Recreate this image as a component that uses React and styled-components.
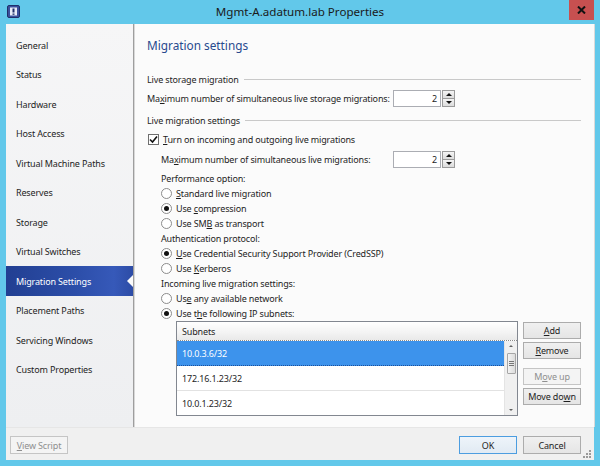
import React from "react";
import styled, { createGlobalStyle, css } from "styled-components";

const Global = createGlobalStyle`
  html, body { margin: 0; padding: 0; }
  body {
    width: 600px; height: 466px; overflow: hidden;
    font-family: "Noto Sans", "Open Sans", sans-serif;
    font-size: 9px; letter-spacing: -0.15px; color: #1e1e1e;
  }
  * { box-sizing: border-box; }
`;

const Window = styled.div`
  width: 600px; height: 466px;
  display: flex; flex-direction: column;
  background: #62c8ea;
  padding: 0 6px 6px 6px;
`;

const TitleBar = styled.div`
  height: 24px; flex: none;
  display: grid; grid-template-columns: 1fr auto 1fr;
  align-items: start;
`;

const AppIcon = styled.div`
  padding: 5px 0 0 1px;
  display: flex;
`;

const Title = styled.div`
  font-size: 11.6px; line-height: 24px; color: #1a1a1a; letter-spacing: 0;
`;

const Close = styled.div`
  justify-self: end;
  width: 25px; height: 20px;
  background: #c75050;
  display: flex; align-items: center; justify-content: center;
`;

const Body = styled.div`
  flex: 1; display: flex; flex-direction: column;
  background: #f0f0f0;
`;

const Main = styled.div`
  height: 403px; display: flex;
`;

const Sidebar = styled.div`
  width: 127px; flex: none;
  background: linear-gradient(180deg, #f6f6f7 0%, #eeeff1 100%);
  padding-top: 6px;
`;

const NavItem = styled.div`
  height: 29.5px; display: flex; align-items: center;
  padding-left: 10px; padding-top: 1px; position: relative;
  color: #1e1e1e;
  ${(p) => p.$active && css`
    color: #fff;
    background: linear-gradient(90deg, #223f92 0%, #2c4ea9 55%, #3659b9 85%, #2d4ca6 100%);
    &::after {
      content: ""; position: absolute; right: 0; top: 50%;
      margin-top: -6px;
      border-top: 6px solid transparent; border-bottom: 6px solid transparent;
      border-right: 6px solid #fbfbfb;
    }
  `}
`;

const Divider = styled.div`
  width: 2px; flex: none;
  background: #d8d8d8; border-left: 1px solid #9e9e9e;
`;

const Content = styled.div`
  flex: 1; background: #fbfbfb;
  padding: 9px 13px 0 12px;
  display: flex; flex-direction: column;
  border-right: 1px solid #dadada;
`;

const Heading = styled.div`
  height: 24px; margin-bottom: 12px;
  display: flex; align-items: center;
  font-size: 11.8px; color: #284a8e; letter-spacing: 0;
`;

const SectionHead = styled.div`
  height: 20px; display: flex; align-items: center;
  margin-top: ${(p) => p.$mt || 0}px;
  &::after { content: ""; flex: 1; height: 1px; background: #c9c9c9; margin-left: 5px; }
`;

const Row = styled.div`
  height: ${(p) => p.$h || 15.1}px;
  display: flex; align-items: center;
`;

const FieldLabel = styled.div`
  width: ${(p) => p.$w}px; flex: none; white-space: nowrap;
`;

const Indent = styled.div`
  padding-left: 14px; display: flex; flex-direction: column;
`;

const K = styled.span`text-decoration: underline;`;

const SpinWrap = styled.div`
  display: flex; gap: 1px; height: 17px;
`;

const SpinInput = styled.div`
  width: 48px; height: 17px; background: #fff;
  border: 1px solid #abadb3;
  display: flex; align-items: center; justify-content: flex-end;
  padding-right: 3px;
`;

const SpinBtns = styled.div`
  width: 13px; height: 17px; display: flex; flex-direction: column;
`;

const SpinBtn = styled.div`
  flex: 1; border: 1px solid #9a9a9a;
  ${(p) => p.$down ? "border-top: none;" : ""}
  background: linear-gradient(180deg, #f4f4f4, #dcdcdc);
  display: flex; align-items: center; justify-content: center;
`;

const Tri = styled.span`
  width: 0; height: 0;
  border-left: 3px solid transparent; border-right: 3px solid transparent;
  ${(p) => p.$down ? "border-top: 3px solid #111;" : "border-bottom: 3px solid #111;"}
`;

const CheckBox = styled.div`
  width: 11px; height: 11px; border: 1px solid #6f6f6f; background: #fff;
  display: flex; align-items: center; justify-content: center;
  margin: 0 4px 0 1px; flex: none;
`;

const Radio = styled.div`
  width: 11px; height: 11px; border-radius: 50%;
  border: 1px solid #8c8c8c; background: #fff;
  display: flex; align-items: center; justify-content: center;
  margin-right: 4px; flex: none;
  &::after {
    content: ""; width: 5px; height: 5px; border-radius: 50%;
    background: ${(p) => (p.$on ? "#111" : "transparent")};
  }
`;

const ListArea = styled.div`
  display: flex; gap: 5px; padding-left: 15px;
`;

const Table = styled.div`
  width: 342px; height: 95px; border: 1px solid #828790;
  background: #fff; display: flex; flex-direction: column;
`;

const THead = styled.div`
  height: 19px; flex: none; display: flex; align-items: center;
  padding-left: 5px;
  background: linear-gradient(180deg, #ffffff 0%, #f3f3f3 60%, #e9e9e9 100%);
  border-bottom: 1px dotted #8a8a8a;
`;

const TBody = styled.div`
  flex: 1; display: flex;
`;

const Rows = styled.div`
  flex: 1; display: flex; flex-direction: column;
`;

const TRow = styled.div`
  flex: 1; display: flex; align-items: center; padding-left: 5px;
  border-bottom: 1px solid #e2e2e2;
  &:last-child { border-bottom: none; }
  ${(p) => p.$sel && css`
    background: #3d93ec; color: #fff;
    border-bottom: 1px dotted #1b4f9a;
  `}
`;

const Scroll = styled.div`
  width: 13px; flex: none; background: #f0f0f0;
  border-left: 1px solid #e4e4e4;
  display: flex; flex-direction: column; align-items: center;
  padding: 4px 0 4px;
`;

const Arrow = styled.span`
  width: 0; height: 0;
  border-left: 2.5px solid transparent; border-right: 2.5px solid transparent;
  ${(p) => p.$down ? "border-top: 2.5px solid #606060;" : "border-bottom: 2.5px solid #606060;"}
`;

const Thumb = styled.div`
  width: 9px; height: 21px; margin-top: 6px;
  border: 1px solid #a6a6a6; border-radius: 1px;
  background: linear-gradient(90deg, #f3f3f3, #dcdcdc);
  display: flex; flex-direction: column; align-items: center; justify-content: center; gap: 1px;
  & > i { width: 5px; height: 1px; background: #777; display: block; }
`;

const Fill = styled.div`flex: 1;`;

const BtnCol = styled.div`
  display: flex; flex-direction: column; padding-top: 1px;
`;

const Button = styled.div`
  width: 58px; height: ${(p) => p.$h || 17}px; flex: none;
  display: flex; align-items: center; justify-content: center;
  border: 1px solid #acacac;
  background: linear-gradient(180deg, #f0f0f0, #e5e5e5);
  color: #1e1e1e;
  margin-top: ${(p) => p.$mt || 0}px;
  ${(p) => p.$default && css`border-color: #4c9de0; background: linear-gradient(180deg, #eef4fa, #e1eaf3);`}
  ${(p) => p.$disabled && css`
    background: #f4f4f4; border-color: #c5c5c5; color: #8f8f8f;
  `}
`;

const Footer = styled.div`
  flex: 1; display: flex; align-items: flex-start;
  padding: 8px 13px 0 4px; gap: 6px; position: relative;
  border-top: 1px solid #e6e6e6;
`;

const Grip = styled.div`
  position: absolute; right: 3px; bottom: 2px;
  display: grid; grid-template-columns: repeat(3, 2px); gap: 1px;
  & > i { width: 2px; height: 2px; display: block; }
  & > i.on { background: #9a9a9a; }
`;

const navItems = [
  "General", "Status", "Hardware", "Host Access", "Virtual Machine Paths",
  "Reserves", "Storage", "Virtual Switches", "Migration Settings",
  "Placement Paths", "Servicing Windows", "Custom Properties",
];

function Spin({ value }) {
  return (
    <SpinWrap>
      <SpinInput>{value}</SpinInput>
      <SpinBtns>
        <SpinBtn><Tri /></SpinBtn>
        <SpinBtn $down><Tri $down /></SpinBtn>
      </SpinBtns>
    </SpinWrap>
  );
}

function RadioRow({ on, children }) {
  return (
    <Row>
      <Radio $on={on} />
      <span>{children}</span>
    </Row>
  );
}

export default function App() {
  return (
    <>
      <Global />
      <Window>
        <TitleBar>
          <AppIcon>
            <svg width="13" height="13" viewBox="0 0 13 13">
              <rect x="0.5" y="0.5" width="12" height="12" rx="1.5" fill="#3a4f9c" stroke="#1f2f6a" />
              <rect x="3" y="2.5" width="7" height="8" fill="#e8ecf8" />
              <rect x="5.5" y="3.5" width="2" height="4" fill="#1f2f6a" />
              <rect x="5.5" y="8.5" width="2" height="1.3" fill="#1f2f6a" />
            </svg>
          </AppIcon>
          <Title>Mgmt-A.adatum.lab Properties</Title>
          <Close>
            <svg width="9" height="8" viewBox="0 0 9 8">
              <path d="M1 0.5 L8 7.5 M8 0.5 L1 7.5" stroke="#111" strokeWidth="2" />
            </svg>
          </Close>
        </TitleBar>
        <Body>
          <Main>
            <Sidebar>
              {navItems.map((n) => (
                <NavItem key={n} $active={n === "Migration Settings"}>{n}</NavItem>
              ))}
            </Sidebar>
            <Divider />
            <Content>
              <Heading>Migration settings</Heading>
              <SectionHead>Live storage migration</SectionHead>
              <Row $h={18}>
                <FieldLabel $w={246}>Ma<K>x</K>imum number of simultaneous live storage migrations:</FieldLabel>
                <Spin value="2" />
              </Row>
              <SectionHead $mt={3}>Live migration settings</SectionHead>
              <Row $h={18}>
                <CheckBox>
                  <svg width="9" height="9" viewBox="0 0 9 9">
                    <path d="M1 4.5 L3.5 7 L8 1.5" fill="none" stroke="#111" strokeWidth="1.6" />
                  </svg>
                </CheckBox>
                <span><K>T</K>urn on incoming and outgoing live migrations</span>
              </Row>
              <Indent>
                <Row $h={22.5}>
                  <FieldLabel $w={232}>Ma<K>x</K>imum number of simultaneous live migrations:</FieldLabel>
                  <Spin value="2" />
                </Row>
                <Row>Performance option:</Row>
                <RadioRow><K>S</K>tandard live migration</RadioRow>
                <RadioRow on>Use <K>c</K>ompression</RadioRow>
                <RadioRow>Use SM<K>B</K> as transport</RadioRow>
                <Row>Authentication protocol:</Row>
                <RadioRow on><K>U</K>se Credential Security Support Provider (CredSSP)</RadioRow>
                <RadioRow>Use <K>K</K>erberos</RadioRow>
                <Row>Incoming live migration settings:</Row>
                <RadioRow>Us<K>e</K> any available network</RadioRow>
                <RadioRow on>Use t<K>h</K>e following IP subnets:</RadioRow>
                <ListArea>
                  <Table>
                    <THead>Subnets</THead>
                    <TBody>
                      <Rows>
                        <TRow $sel>10.0.3.6/32</TRow>
                        <TRow>172.16.1.23/32</TRow>
                        <TRow>10.0.1.23/32</TRow>
                      </Rows>
                      <Scroll>
                        <Arrow />
                        <Thumb><i /><i /><i /></Thumb>
                        <Fill />
                        <Arrow $down />
                      </Scroll>
                    </TBody>
                  </Table>
                  <BtnCol>
                    <Button><K>A</K>dd</Button>
                    <Button $mt={3}><K>R</K>emove</Button>
                    <Button $mt={9} $disabled>M<K>o</K>ve up</Button>
                    <Button $mt={3}>Move do<K>w</K>n</Button>
                  </BtnCol>
                </ListArea>
              </Indent>
            </Content>
          </Main>
          <Footer>
            <Button $disabled $h={18}>
              <span><K>V</K>iew Script</span>
            </Button>
            <Fill />
            <Button $default $h={18}>OK</Button>
            <Button $h={18}>Cancel</Button>
            <Grip>
              <i /><i /><i className="on" />
              <i /><i className="on" /><i className="on" />
              <i className="on" /><i className="on" /><i className="on" />
            </Grip>
          </Footer>
        </Body>
      </Window>
    </>
  );
}
